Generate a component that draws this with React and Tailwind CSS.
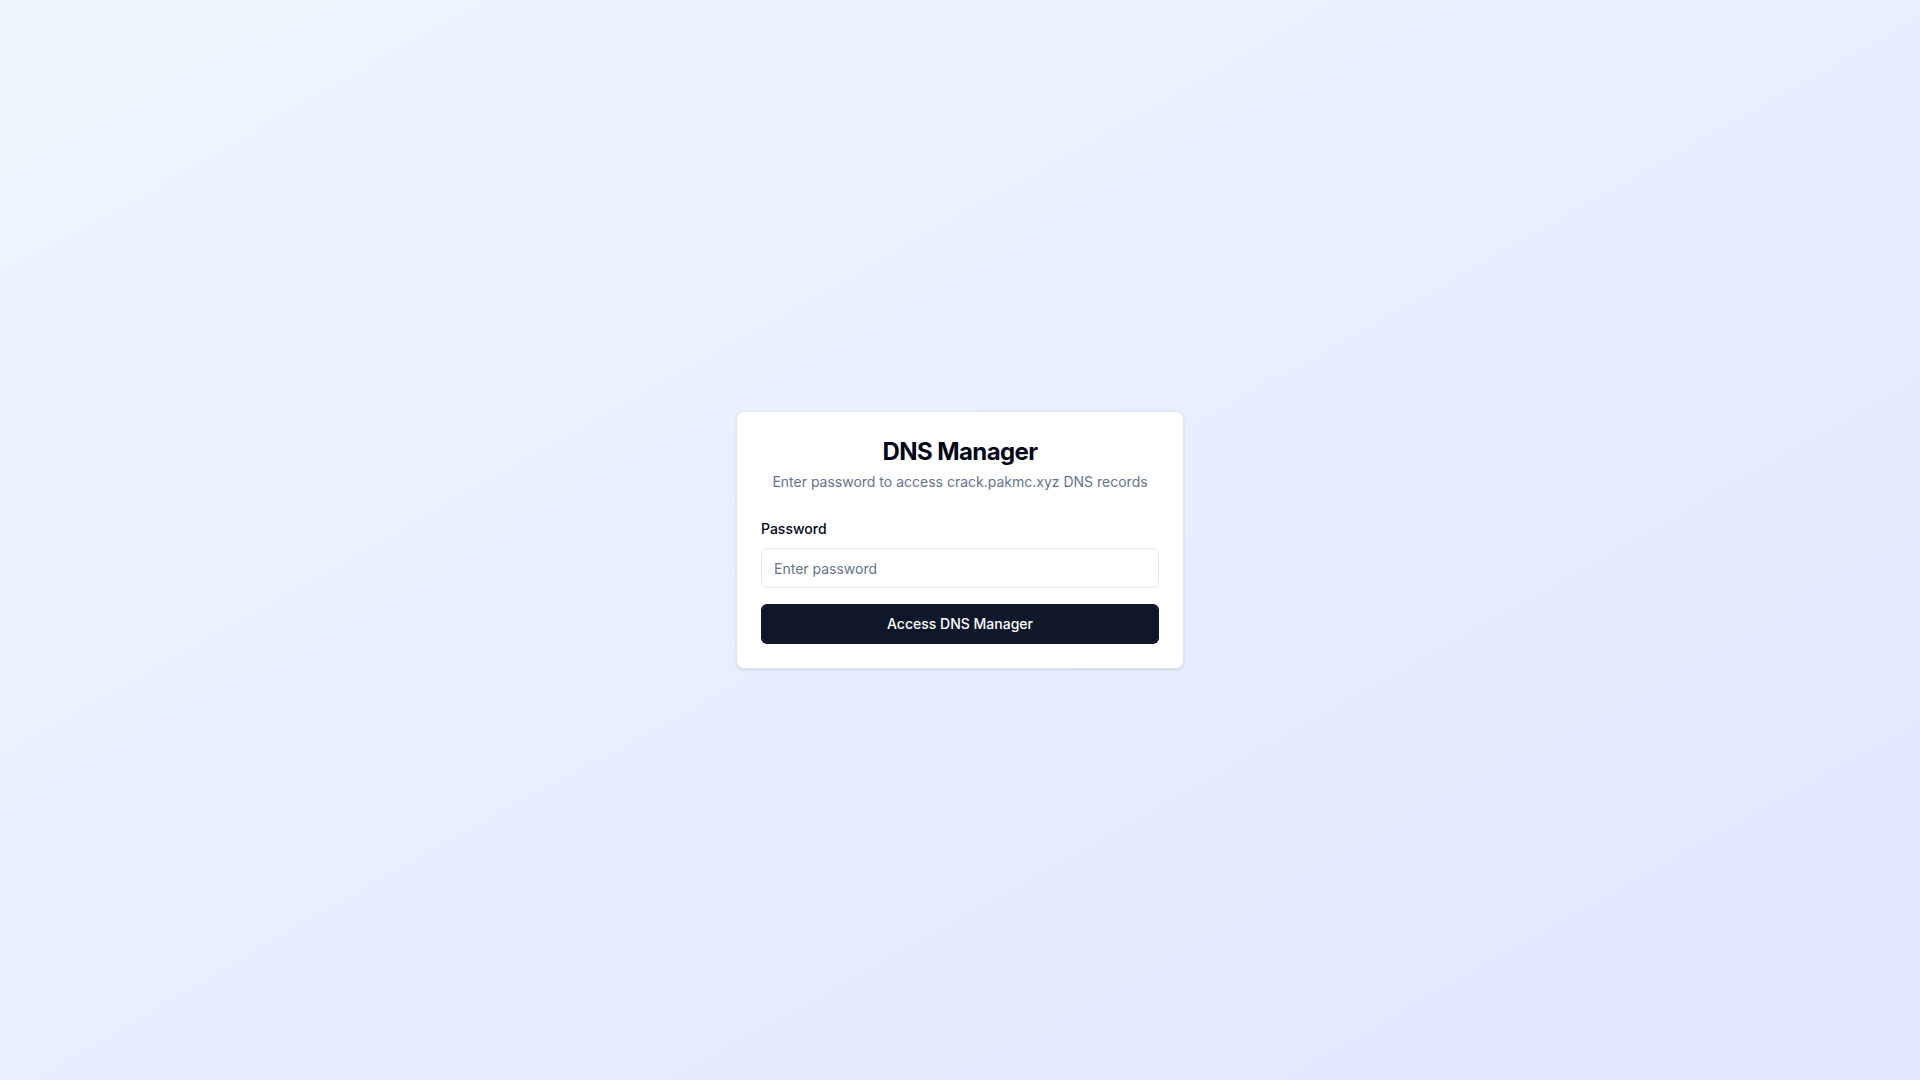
export default function App() {
  return (
    <div
      className="min-h-screen w-full flex items-center justify-center bg-linear-to-br from-blue-50 to-indigo-100"
      style={{ fontFamily: "Inter, 'Noto Sans', sans-serif" }}
    >
      <div className="w-full max-w-md rounded-lg border border-slate-200 bg-white shadow-sm">
        <div className="px-6 pt-6 pb-[27px] flex flex-col gap-1 text-center">
          <h1 className="text-2xl font-bold text-slate-950 tracking-tight">DNS Manager</h1>
          <p className="text-sm text-slate-500">Enter password to access crack.pakmc.xyz DNS records</p>
        </div>
        <div className="px-6 pb-6">
          <label className="block text-sm font-medium text-slate-950">Password</label>
          <input
            type="password"
            placeholder="Enter password"
            className="mt-[9px] flex h-10 w-full rounded-md border border-slate-200 bg-white px-3 text-sm placeholder:text-slate-500 outline-none"
          />
          <button className="mt-4 flex h-10 w-full items-center justify-center rounded-md bg-slate-900 text-sm font-medium text-white">
            Access DNS Manager
          </button>
        </div>
      </div>
    </div>
  );
}
